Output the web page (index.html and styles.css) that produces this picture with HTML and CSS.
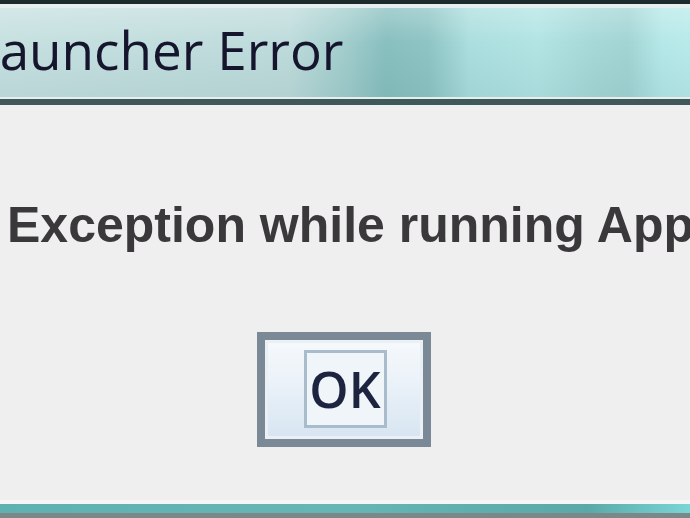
FILE: index.html
```html
<!DOCTYPE html>
<html lang="en">
    <head>
        <meta charset="UTF-8" />
        <title>Launcher Error</title>
        <link rel="stylesheet" href="styles.css">
    </head>
    <body>
        <div class="window">
            <div class="titlebar">
                <div class="caption">
                    <span class="caption-text">Launcher Error</span>
                </div>
            </div>
            <div class="content">
                <p class="message">Exception while running Application</p>
                <div class="actions">
                    <button class="ok-button"><span class="focus">OK</span></button>
                </div>
            </div>
            <div class="bottom-frame"></div>
        </div>
    </body>
</html>
```

FILE: styles.css
```css
html,
body {
    margin: 0;
    height: 100%;
    overflow: hidden;
}
body {
    background: #efefef;
    font-family: 'Liberation Sans', Arial, sans-serif;
}
.window {
    display: flex;
    flex-direction: column;
    height: 518px;
}
.titlebar {
    border-top: 4px solid #1d2b2c;
    border-bottom: 6px solid #405859;
    padding: 4px 0 2px;
    background: #e6efef;
}
.caption {
    height: 89px;
    display: flex;
    align-items: center;
    overflow: hidden;
    background:
        linear-gradient(180deg, rgba(255, 255, 255, 0.25) 0%, rgba(255, 255, 255, 0) 40%, rgba(0, 60, 60, 0.06) 100%),
        linear-gradient(90deg, #c6e0e0 0%, #bedbdb 42%, #a2cdcd 50%, #88bfbf 56%, #8ec4c4 62%, #abdede 68%, #b2e4e4 78%, #a6d8d8 86%, #a2d4d4 91%, #b5e8e8 96%, #b8eaea 100%);
}
.caption-text {
    font-family: 'Open Sans', 'DejaVu Sans', sans-serif;
    font-size: 53px;
    color: #15152e;
    margin-left: -28px;
    margin-top: -6px;
    white-space: nowrap;
}
.content {
    flex: 1;
    display: flex;
    flex-direction: column;
}
.message {
    margin: 90px 0 0 7px;
    font-size: 50px;
    line-height: 60px;
    font-weight: bold;
    color: #3b383c;
    white-space: nowrap;
}
.actions {
    display: flex;
    justify-content: center;
    margin-top: 77px;
}
.ok-button {
    width: 174px;
    height: 115px;
    border: 8px solid #7a8995;
    background: linear-gradient(180deg, #f6f9fc 0%, #eaf1f8 45%, #d7e5f1 100%);
    box-shadow: inset 0 0 0 3px #e9f0f6;
    display: flex;
    align-items: center;
    justify-content: center;
    padding: 0;
    margin-left: -2px;
}
.focus {
    display: block;
    box-sizing: border-box;
    width: 83px;
    height: 78px;
    border: 3px solid #a8bccb;
    background: #f0f5fa;
    font-family: 'Open Sans', 'DejaVu Sans', sans-serif;
    font-size: 50px;
    font-weight: 600;
    line-height: 72px;
    color: #1c2440;
    text-align: center;
    margin: 0 0 2px 2px;
}
.bottom-frame {
    height: 18px;
    box-sizing: border-box;
    border-top: 4px solid #f6f4f4;
    border-bottom: 5px solid #7c8887;
    background: linear-gradient(90deg, #5fb0b0 0%, #66b6b6 50%, #5aa8a8 85%, #7ad6d6 100%);
}
```
